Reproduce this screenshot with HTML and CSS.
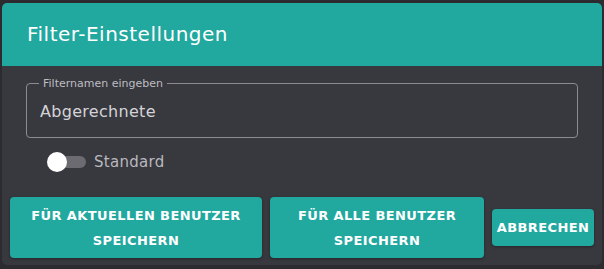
FILE: index.html
```html
<!DOCTYPE html>
<html lang="de">
<head>
    <meta charset="UTF-8">
    <title>Filter-Einstellungen</title>
    <link rel="stylesheet" href="styles.css">
</head>
<body>
    <div class="dialog">
        <div class="dialog-header">Filter-Einstellungen</div>
        <div class="dialog-body">
            <fieldset class="field">
                <legend>Filternamen eingeben</legend>
                <div class="field-value">Abgerechnete</div>
            </fieldset>
            <div class="switch-row">
                <span class="switch"><span class="switch-thumb"></span></span>
                <span class="switch-label">Standard</span>
            </div>
        </div>
        <div class="dialog-actions">
            <button class="btn btn-wide">Für aktuellen Benutzer speichern</button>
            <button class="btn btn-mid">Für alle Benutzer speichern</button>
            <button class="btn btn-small">Abbrechen</button>
        </div>
    </div>
</body>
</html>
```

FILE: styles.css
```css
body {
    margin: 0;
    padding: 3px 2px 0 2px;
    background-color: #2b2b30;
    font-family: "DejaVu Sans", sans-serif;
}
.dialog {
    width: 600px;
    height: 262px;
    background-color: #38383f;
    border-radius: 5px;
    overflow: hidden;
    box-sizing: border-box;
}
.dialog-header {
    height: 63px;
    background-color: #21a89f;
    color: #ffffff;
    font-size: 20px;
    letter-spacing: 0.5px;
    line-height: 63px;
    padding-left: 25px;
}
.dialog-body {
    padding: 11px 24px 0 24px;
}
.field {
    box-sizing: border-box;
    margin: 0;
    padding: 0 13px;
    height: 61px;
    border: 1px solid #8b8b90;
    border-radius: 4px;
}
.field legend {
    font-size: 11px;
    color: #bdbdc1;
    padding: 0 4px;
    margin-left: -1px;
}
.field-value {
    font-size: 16px;
    letter-spacing: 0.3px;
    color: #d4d4d7;
    line-height: 20px;
    padding-top: 12px;
}
.switch-row {
    display: flex;
    align-items: center;
    gap: 8px;
    margin-top: 15px;
    padding-left: 25px;
}
.switch {
    position: relative;
    width: 35px;
    height: 12px;
    border-radius: 6px;
    background-color: #6b6b71;
}
.switch-thumb {
    position: absolute;
    left: -4px;
    top: -4px;
    width: 20px;
    height: 20px;
    border-radius: 50%;
    background-color: #ffffff;
}
.switch-label {
    font-size: 15px;
    letter-spacing: 0.3px;
    color: #b8b8bd;
}
.dialog-actions {
    display: flex;
    align-items: center;
    gap: 8px;
    padding: 26px 8px 0 8px;
}
.btn {
    border: none;
    border-radius: 4px;
    background-color: #21a89f;
    color: #ffffff;
    font-family: inherit;
    font-weight: bold;
    font-size: 13px;
    letter-spacing: 0.4px;
    text-transform: uppercase;
    line-height: 25px;
    padding: 0;
    box-shadow: 0 1px 3px rgba(0,0,0,0.35);
}
.btn-wide {
    width: 252px;
    height: 61px;
    padding: 0 16px;
}
.btn-mid {
    width: 214px;
    height: 61px;
    padding: 0 20px;
}
.btn-small {
    width: 102px;
    height: 37px;
}
```
